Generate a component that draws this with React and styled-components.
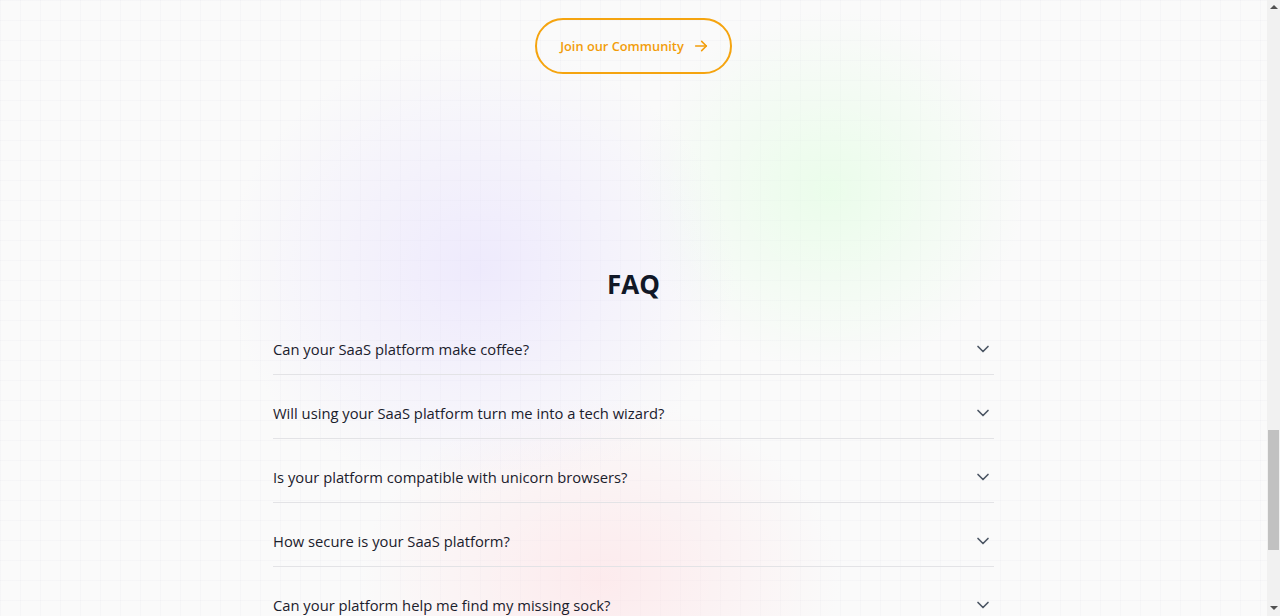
import React from "react";
import styled, { createGlobalStyle } from "styled-components";

const GlobalStyle = createGlobalStyle`
  * { box-sizing: border-box; }
  html, body {
    margin: 0;
    padding: 0;
    height: 616px;
    overflow: hidden;
    font-family: "Open Sans", "Noto Sans", sans-serif;
    color: #111827;
  }
`;

const faqs = [
  "Can your SaaS platform make coffee?",
  "Will using your SaaS platform turn me into a tech wizard?",
  "Is your platform compatible with unicorn browsers?",
  "How secure is your SaaS platform?",
  "Can your platform help me find my missing sock?",
];

const Shell = styled.div`
  display: flex;
  width: 1280px;
  height: 616px;
`;

const Page = styled.main`
  flex: 1;
  height: 100%;
  overflow: hidden;
  background-color: #fafafa;
  background-image:
    radial-gradient(ellipse 340px 300px at 480px 270px, rgba(226, 218, 255, 0.5), transparent 75%),
    radial-gradient(ellipse 260px 240px at 830px 190px, rgba(222, 255, 222, 0.55), transparent 75%),
    radial-gradient(ellipse 320px 240px at 600px 580px, rgba(255, 222, 226, 0.55), transparent 75%),
    linear-gradient(rgba(120, 120, 160, 0.03) 1px, transparent 1px),
    linear-gradient(90deg, rgba(120, 120, 160, 0.03) 1px, transparent 1px);
  background-size: 100% 100%, 100% 100%, 100% 100%, 20px 20px, 20px 20px;
  display: flex;
  flex-direction: column;
  align-items: center;
  padding-top: 18px;

  & > * {
    flex-shrink: 0;
  }
`;

const CommunityButton = styled.a`
  display: inline-flex;
  align-items: center;
  gap: 9px;
  height: 56px;
  padding: 0 21px 0 23px;
  border: 2px solid #f5a40f;
  border-radius: 999px;
  color: #f29d0a;
  font-size: 12.8px;
  font-weight: 600;
  text-decoration: none;
  cursor: pointer;
`;

const Heading = styled.h2`
  margin: 193px 0 0;
  font-size: 26px;
  line-height: 34px;
  font-weight: 700;
  color: #111827;
`;

const List = styled.div`
  width: 721px;
  margin-top: 10px;
  display: flex;
  flex-direction: column;
`;

const Row = styled.div`
  display: flex;
  align-items: center;
  justify-content: space-between;
  padding: 19px 0 6px 0;
  height: 64px;
  flex-shrink: 0;
  border-bottom: 1px solid #e3e3e6;
  font-size: 14.75px;
  font-weight: 500;
  color: #1a202c;
`;

const Chevron = styled.svg`
  width: 20px;
  height: 20px;
  margin-right: 1px;
  color: #4b5563;
`;

const Scrollbar = styled.div`
  width: 13px;
  height: 100%;
  background: #f1f1f1;
  display: flex;
  flex-direction: column;
  align-items: center;
`;

const Arrow = styled.div`
  width: 0;
  height: 0;
  border-left: 4px solid transparent;
  border-right: 4px solid transparent;
  ${(p) => (p.$up ? "border-bottom: 4px solid #505050;" : "border-top: 4px solid #505050;")}
  margin: ${(p) => (p.$up ? "5px 0 0" : "0 0 6px")};
`;

const Thumb = styled.div`
  width: 11px;
  height: 120px;
  background: #c1c1c1;
  margin-top: 421px;
`;

const Spacer = styled.div`
  flex: 1;
`;

export default function App() {
  return (
    <>
      <GlobalStyle />
      <Shell>
        <Page>
          <CommunityButton>
            Join our Community
            <svg width="16" height="16" viewBox="0 0 24 24" fill="none" stroke="currentColor" strokeWidth="2.3" strokeLinecap="round" strokeLinejoin="round">
              <path d="M4 12h16" />
              <path d="M13 5l7 7-7 7" />
            </svg>
          </CommunityButton>
          <Heading>FAQ</Heading>
          <List>
            {faqs.map((q) => (
              <Row key={q}>
                <span>{q}</span>
                <Chevron viewBox="0 0 24 24" fill="none" stroke="currentColor" strokeWidth="2" strokeLinecap="round" strokeLinejoin="round">
                  <path d="M6 9l6 6 6-6" />
                </Chevron>
              </Row>
            ))}
          </List>
        </Page>
        <Scrollbar>
          <Arrow $up />
          <Thumb />
          <Spacer />
          <Arrow />
        </Scrollbar>
      </Shell>
    </>
  );
}
